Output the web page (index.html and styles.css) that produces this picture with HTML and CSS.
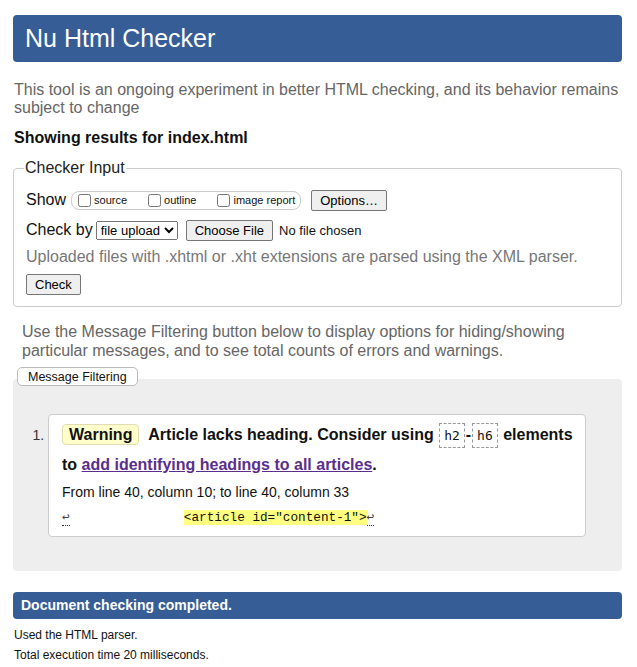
FILE: index.html
```html
<!DOCTYPE html>
<html>
<head>
<meta charset="utf-8">
<title>Nu Html Checker</title>
<link rel="stylesheet" href="styles.css">
</head>
<body>
<div class="page">
  <h1 class="title">Nu Html Checker</h1>
  <p class="intro">This tool is an ongoing experiment in better HTML checking, and its behavior remains subject to change</p>
  <p class="showing">Showing results for index.html</p>
  <fieldset class="checker">
    <legend>Checker Input</legend>
    <div class="row">
      <span class="lbl">Show</span>
      <span class="opts">
        <label><input type="checkbox">source</label>
        <label><input type="checkbox">outline</label>
        <label><input type="checkbox">image report</label>
      </span>
      <button class="btn">Options…</button>
    </div>
    <div class="row">
      <span class="lbl">Check by</span>
      <select class="sel"><option>file upload</option></select>
      <button class="btn file">Choose File</button>
      <span class="nofile">No file chosen</span>
    </div>
    <p class="note">Uploaded files with .xhtml or .xht extensions are parsed using the XML parser.</p>
    <button class="btn check">Check</button>
  </fieldset>
  <p class="filter-note">Use the Message Filtering button below to display options for hiding/showing particular messages, and to see total counts of errors and warnings.</p>
  <button class="filter-btn">Message Filtering</button>
  <div class="results">
    <ol class="msgs">
      <li>
        <div class="msg">
          <p class="msg-text"><span class="badge">Warning</span> <span>Article lacks heading. Consider using</span> <code class="tag">h2</code>-<code class="tag">h6</code> <span>elements</span><br><span>to</span> <a href="#">add identifying headings to all articles</a>.</p>
          <p class="loc">From line 40, column 10; to line 40, column 33</p>
          <p class="extract"><span class="lf">↩</span><span>               </span><mark class="hl">&lt;article id="content-1"&gt;</mark><span class="lf">↩</span></p>
        </div>
      </li>
    </ol>
  </div>
  <h2 class="done">Document checking completed.</h2>
  <p class="meta">Used the HTML parser.</p>
  <p class="meta">Total execution time 20 milliseconds.</p>
</div>
</body>
</html>
```

FILE: styles.css
```css
html, body {
  margin: 0;
  padding: 0;
  background: #fff;
}
body {
  font-family: "Liberation Sans", Arial, sans-serif;
  color: #111;
}
.page {
  width: 609px;
  margin-left: 13px;
  padding-top: 15px;
}
.title {
  margin: 0;
  height: 47px;
  line-height: 47px;
  background: #365d95;
  color: #fff;
  font-weight: normal;
  font-size: 25px;
  padding-left: 12px;
  border-radius: 4px;
}
.intro {
  margin: 19px 0 0 1px;
  color: #666;
  font-size: 16px;
  line-height: 18px;
}
.showing {
  margin: 12px 0 0 1px;
  font-weight: bold;
  font-size: 16px;
  color: #111;
}
.checker {
  margin: 12px 0 0 0;
  border: 1px solid #ccc;
  border-radius: 4px;
  padding: 8px 12px 11px 12px;
}
.checker legend {
  font-size: 16px;
  color: #222;
  padding: 0 1px;
  margin-left: -2px;
}
.row {
  display: flex;
  align-items: center;
  height: 30px;
  font-size: 16px;
}
.lbl {
  margin-right: 3px;
}
.opts {
  display: inline-flex;
  align-items: center;
  border: 1px solid #ccc;
  border-radius: 8px;
  height: 17px;
  padding: 0 5px 0 6px;
  margin-left: 2px;
  margin-right: 10px;
  font-size: 11px;
}
.opts label {
  display: inline-flex;
  align-items: center;
  margin-right: 21px;
}
.opts label:last-child {
  margin-right: 0;
}
.opts input {
  margin: 0 3px 0 0;
  width: 13px;
  height: 13px;
}
.btn {
  font-family: "Liberation Sans", Arial, sans-serif;
  font-size: 13px;
  background: #efefef;
  border: 1px solid #767676;
  border-radius: 2px;
  padding: 1px 8px;
  color: #000;
  height: 21px;
}
.sel {
  font-family: "Liberation Sans", Arial, sans-serif;
  font-size: 13px;
  height: 19px;
  margin-right: 8px;
}
.file {
  margin-right: 6px;
}
.nofile {
  font-size: 13px;
}
.note {
  margin: 3px 0 0 0;
  color: #777;
  font-size: 16px;
}
.check {
  margin-top: 8px;
}
.filter-note {
  margin: 15px 0 0 9px;
  color: #666;
  font-size: 16px;
  line-height: 19px;
}
.filter-btn {
  position: relative;
  z-index: 1;
  margin: 7px 0 0 4px;
  font-family: "Liberation Sans", Arial, sans-serif;
  font-size: 12.5px;
  background: #fff;
  border: 1px solid #bbb;
  border-radius: 5px;
  padding: 0 10px;
  height: 19px;
  color: #111;
}
.results {
  margin-top: -7px;
  background: #eee;
  border-radius: 4px;
  padding: 35px 36px 34px 0;
}
.msgs {
  margin: 0;
  padding: 0 0 0 35px;
  font-size: 14px;
}
.msgs li::marker {
  color: #333;
}
.msg {
  background: #fff;
  border: 1px solid #ccc;
  border-radius: 4px;
  padding: 5px 12px 8px 13px;
}
.msg-text {
  margin: 0;
  font-weight: bold;
  font-size: 16px;
  line-height: 29px;
  color: #111;
}
.badge {
  display: inline-block;
  background: #ffffcc;
  border: 1px solid #e2ddb0;
  border-radius: 4px;
  padding: 0 6px;
  line-height: 19px;
  margin-right: 5px;
}
.tag {
  font-family: "DejaVu Sans Mono", monospace;
  font-weight: normal;
  font-size: 13px;
  border: 1px dashed #999;
  padding: 4px 4px;
  margin: 0 1px;
}
.msg a {
  color: #5b2e8c;
  text-decoration: underline;
}
.loc {
  margin: 5px 0 0 0;
  font-size: 14px;
  line-height: 16px;
  color: #111;
}
.extract {
  margin: 8px 0 0 0;
  font-family: "Liberation Mono", monospace;
  font-size: 12.7px;
  white-space: pre;
  line-height: 20px;
}
.lf {
  color: #444;
  border-bottom: 1px dotted #333;
}
.hl {
  background: #ffff80;
  color: #111;
}
.done {
  margin: 21px 0 0 0;
  background: #365d95;
  color: #fff;
  font-size: 14px;
  height: 27px;
  line-height: 27px;
  padding-left: 8px;
  border-radius: 4px;
}
.meta {
  margin: 9px 0 0 1px;
  font-size: 12px;
  line-height: 14px;
  color: #111;
}
.meta + .meta {
  margin-top: 6px;
}
```
